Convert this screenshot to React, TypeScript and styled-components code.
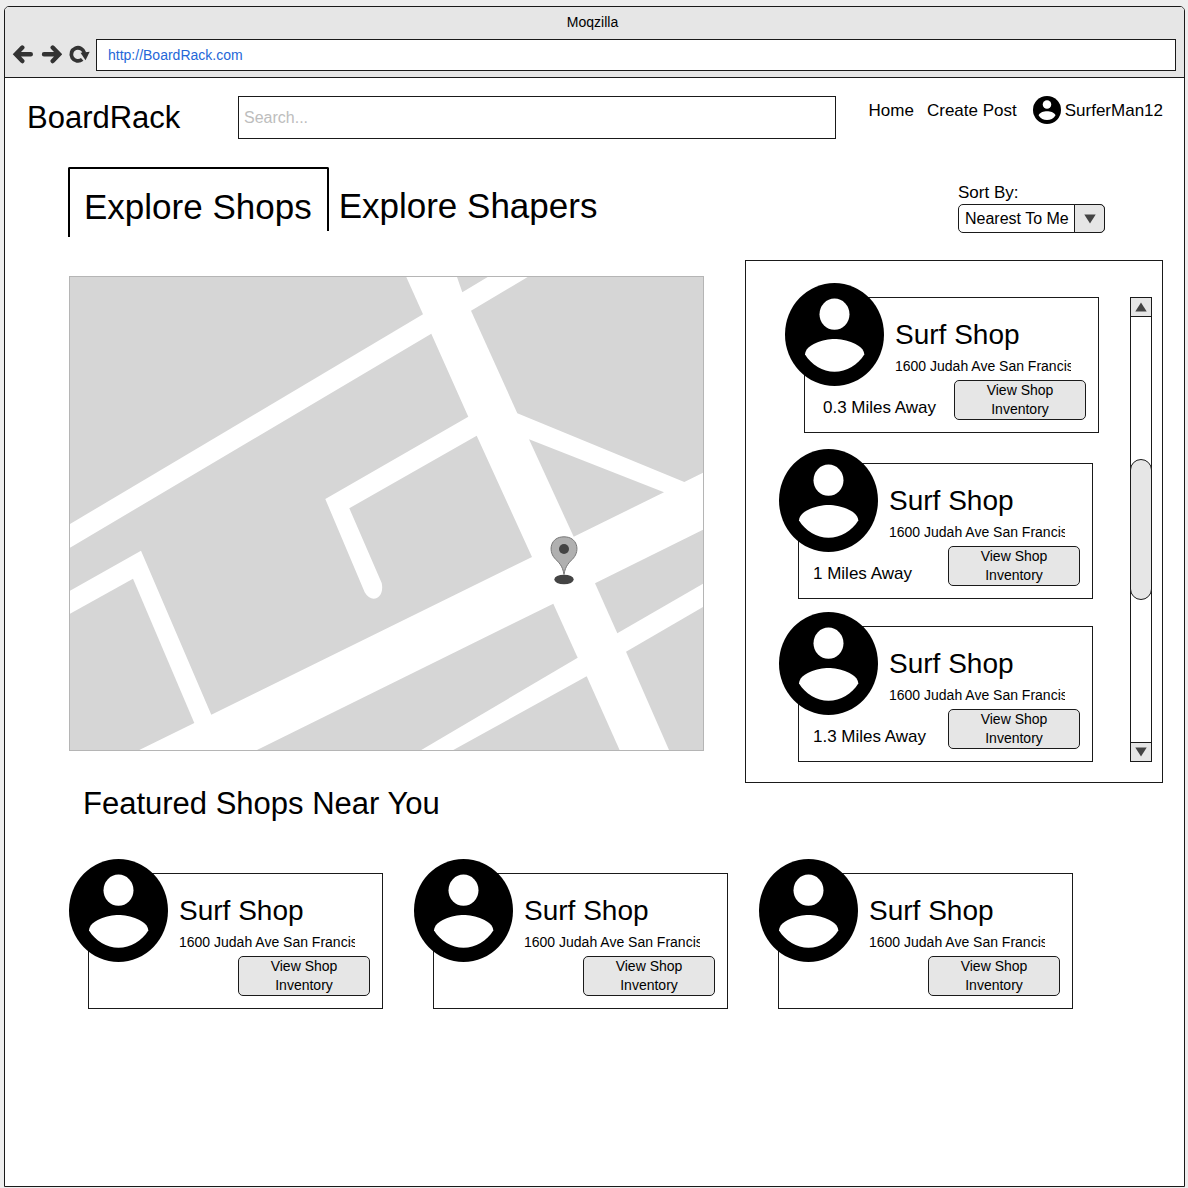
import React from "react";
import styled, { createGlobalStyle } from "styled-components";

const ink = "#1a1a1a";
const chrome = "#e6e6e6";

const GlobalStyle = createGlobalStyle`
  *, *::before, *::after { box-sizing: border-box; }
  body {
    margin: 0;
    background: #eeeeee;
    color: #000;
    font-family: "Liberation Sans", Arial, Helvetica, sans-serif;
    font-size: 16px;
  }
  button, input, select { font: inherit; color: inherit; }
  h1, h2, h3, p, ul { margin: 0; padding: 0; font-weight: 400; }
  ul { list-style: none; }
  a { color: inherit; text-decoration: none; }
`;

const Desktop = styled.div`
  display: flex;
  min-height: 100vh;
  padding: 6px 3px 1px 4px;
`;

const BrowserWindow = styled.div`
  flex: 1;
  min-width: 0;
  background: #fff;
  border: 1px solid ${ink};
  border-radius: 5px 5px 0 0;
  overflow: hidden;
`;

const BrowserBar = styled.div`
  background: ${chrome};
  border-bottom: 1px solid ${ink};
  padding-bottom: 6px;
`;

const WindowTitle = styled.div`
  font-size: 14px;
  line-height: 30px;
  text-align: center;
  padding: 0 4px 2px 0;
`;

const AddressRow = styled.div`
  display: flex;
  align-items: center;
  padding: 0 8px 0 7px;
`;

const BrowserButton = styled.button`
  display: flex;
  width: 28px;
  height: 28px;
  padding: 4px 0;
  border: 0;
  background: none;

  svg { width: 22px; height: 20px; }
`;

const AddressInput = styled.input`
  flex: 1;
  min-width: 0;
  height: 32px;
  padding: 0 11px;
  background: #fff;
  border: 1px solid ${ink};
  color: #2467d8;
  font-size: 14px;
`;

const SiteHeader = styled.header`
  display: flex;
  padding: 18px 21px 28px 22px;
`;

const Brand = styled.h1`
  flex: 0 0 211px;
  font-size: 31px;
  line-height: 43px;
`;

const SearchInput = styled.input`
  flex: 1;
  min-width: 0;
  height: 43px;
  padding: 0 5px;
  background: #fff;
  border: 1px solid ${ink};

  &::placeholder { color: #bdbdbd; opacity: 1; }
`;

const Nav = styled.nav`
  display: flex;
  gap: 13px;
  margin-left: 33px;
  font-size: 17px;
  line-height: 30px;
`;

const UserLink = styled.a`
  display: flex;
  gap: 4px;
  margin-left: 3px;
`;

const Avatar = styled.svg<{ $small?: boolean }>`
  display: block;
  flex: none;
  width: ${(p) => (p.$small ? 28 : 99)}px;
  height: ${(p) => (p.$small ? 28 : 103)}px;
`;

const Content = styled.main`
  padding: 0 21px 24px 63px;
`;

const Toolbar = styled.div`
  display: flex;
  justify-content: space-between;
  align-items: flex-start;
  height: 93px;
`;

const TabList = styled.div`
  display: flex;
`;

const Tab = styled.button<{ $active?: boolean }>`
  position: relative;
  height: 64px;
  padding: ${(p) => (p.$active ? "14px 15px 0 14px" : "14px 10px 0")};
  background: none;
  border: 0 solid #000;
  border-width: ${(p) => (p.$active ? "2px 2px 0" : "0")};
  border-radius: 2px 2px 0 0;
  font-size: 35px;
  line-height: ${(p) => (p.$active ? 48 : 50)}px;
  white-space: nowrap;

  &::after {
    content: "";
    display: ${(p) => (p.$active ? "block" : "none")};
    position: absolute;
    left: -2px;
    top: 100%;
    width: 2px;
    height: 6px;
    background: #000;
  }
`;

const SortField = styled.div`
  margin-right: 58px;
  padding-top: 14px;
`;

const SortLabel = styled.label`
  display: block;
  font-size: 17px;
  line-height: 23px;
`;

const SelectFrame = styled.div`
  position: relative;
  width: 147px;
  height: 29px;
`;

const Select = styled.select`
  appearance: none;
  width: 100%;
  height: 100%;
  padding: 0 30px 0 6px;
  background: #fff;
  border: 1px solid ${ink};
  border-radius: 5px;
`;

const SelectArrow = styled.span`
  position: absolute;
  top: 0;
  right: 0;
  display: grid;
  place-items: center;
  width: 31px;
  height: 100%;
  background: ${chrome};
  border: 1px solid ${ink};
  border-radius: 0 5px 5px 0;
  pointer-events: none;
`;

const Explorer = styled.section`
  display: grid;
  grid-template-columns: minmax(0, 635fr) minmax(0, 418fr);
  gap: 41px;
  align-items: start;
  padding-left: 1px;
`;

const MapArt = styled.svg`
  display: block;
  width: 100%;
  height: auto;
  margin-top: 16px;
`;

const ShopPanel = styled.div`
  display: flex;
  justify-content: space-between;
  padding: 22px 10px 20px 33px;
  border: 1px solid ${ink};
`;

const ShopList = styled.ul`
  display: flex;
  flex-direction: column;
  gap: 13px;
`;

const ShopItem = styled.li<{ $lead?: boolean }>`
  padding: ${(p) => (p.$lead ? "0 0 3px 6px" : "0")};
`;

const Card = styled.article`
  position: relative;
  width: 314px;
  padding: 14px 0 0 19px;

  > svg {
    position: absolute;
    left: 0;
    top: 0;
  }
`;

const CardBody = styled.div`
  height: 136px;
  padding: 20px 12px 12px 18px;
  border: 1px solid ${ink};
`;

const ShopName = styled.h3`
  padding-left: 72px;
  font-size: 28px;
  line-height: 34px;
`;

const Address = styled.p`
  width: 176px;
  margin: 5px 0 4px 72px;
  overflow: hidden;
  font-size: 14px;
  line-height: 19px;
  white-space: nowrap;
`;

const CardFooter = styled.div<{ $wide?: boolean }>`
  display: flex;
  align-items: center;
  margin-left: ${(p) => (p.$wide ? "-4px" : "0")};
`;

const Distance = styled.p`
  padding-top: 16px;
  font-size: 17px;
  line-height: 24px;
`;

const InventoryButton = styled.button`
  width: 132px;
  height: 40px;
  margin-left: auto;
  padding: 0 20px;
  background: ${chrome};
  border: 1px solid ${ink};
  border-radius: 5px;
  font-size: 14px;
  line-height: 19px;
`;

const ScrollBar = styled.div`
  display: flex;
  flex-direction: column;
  width: 22px;
  margin-top: 14px;
  border: 1px solid ${ink};
`;

const ScrollButton = styled.button<{ $end?: boolean }>`
  display: grid;
  place-items: center;
  height: 19px;
  padding: 0;
  background: ${chrome};
  border: 0 solid ${ink};
  border-width: ${(p) => (p.$end ? "1px 0 0" : "0 0 1px")};
`;

const ScrollTrack = styled.div`
  display: grid;
  grid-template-rows: 1fr 1fr 1fr;
  flex: 1;
`;

const ScrollThumb = styled.div`
  grid-row: 2;
  margin: 0 -1px;
  background: ${chrome};
  border: 1px solid ${ink};
  border-radius: 11px;
`;

const SectionTitle = styled.h2`
  padding-left: 15px;
  margin-bottom: 34px;
  font-size: 31px;
  line-height: 42px;
`;

const FeaturedRow = styled.div`
  display: flex;
  flex-wrap: wrap;
  gap: 31px;
  padding-left: 1px;
`;

function AvatarIcon({ small }: { small?: boolean }) {
  return (
    <Avatar $small={small} viewBox="0 0 99 103" preserveAspectRatio="none" aria-hidden="true">
      <ellipse cx="49.5" cy="51.5" rx="49.5" ry="51.5" fill="#000" />
      <ellipse cx="49.5" cy="31.2" rx="15" ry="15.6" fill="#fff" />
      <path
        d="M20 71.5C20.3 61.5 39 56 49.5 56S79 61.5 79.3 71.5C73 82 61.5 88.7 49.5 88.7S26.5 82 20 71.5Z"
        fill="#fff"
      />
    </Avatar>
  );
}

function Triangle({ up }: { up?: boolean }) {
  return (
    <svg width="12" height="10" viewBox="0 0 12 10" aria-hidden="true">
      <path d={up ? "M6 0.5L11.7 9.5H0.3Z" : "M6 9.5L11.7 0.5H0.3Z"} fill="#444" />
    </svg>
  );
}

type Shop = { id: number; distance?: string };

function ShopCard({ distance, lead }: { distance?: string; lead?: boolean }) {
  return (
    <Card>
      <CardBody>
        <ShopName>Surf Shop</ShopName>
        <Address>1600 Judah Ave San Francis</Address>
        <CardFooter $wide={!lead}>
          {distance && <Distance>{distance}</Distance>}
          <InventoryButton type="button">View Shop Inventory</InventoryButton>
        </CardFooter>
      </CardBody>
      <AvatarIcon />
    </Card>
  );
}

const blocks = [
  "1,1 337.3,1 354,38.3 1,248",
  "388,1 393.3,16.3 418.7,1",
  "458.7,1 402,34.7 448.3,137.3 615.3,206 634,196.7 634,1",
  "460,163.3 595,216.3 504.7,260.7",
  "1,337.7 64,302.7 125.3,447 70.3,474 1,474",
  "188,474 484.3,327.7 508.7,381.7 352.3,474",
  "384.3,474 517.7,400.3 550.6,474",
  "600,474 557,375.7 634,331 634,474",
  "526,307.3 634,253.7 634,307.7 548.3,357.3",
];

function StreetMap() {
  return (
    <MapArt viewBox="0 0 635 475" role="img" aria-label="Map of nearby shops">
      <rect width="635" height="475" fill="#fff" />
      <g fill="#d6d6d6">
        {blocks.map((points) => (
          <polygon key={points} points={points} />
        ))}
        <path d="M362.3 57.7L399.3 140.7L256.3 223L295.7 316.3C302 328 316 323 312.7 307L280.3 232.3L407.7 159.7L463 281L142.3 438.7L72 274.7L1 314.7V271.7Z" />
      </g>
      <rect x="0.5" y="0.5" width="634" height="474" fill="none" stroke="#b5b5b5" />
      <ellipse cx="495" cy="303.5" rx="9.7" ry="4.8" fill="#444" />
      <path
        d="M495 298.5C493.5 289 489.5 286.5 485.5 282C479 274.5 481.5 260.8 495 260.8S511 274.5 504.5 282C500.5 286.5 496.5 289 495 298.5Z"
        fill="#b0b0b0"
        stroke="#777"
      />
      <circle cx="495" cy="273" r="5" fill="#444" />
    </MapArt>
  );
}

const nearby: Shop[] = [
  { id: 1, distance: "0.3 Miles Away" },
  { id: 2, distance: "1 Miles Away" },
  { id: 3, distance: "1.3 Miles Away" },
];

const featured: Shop[] = [{ id: 4 }, { id: 5 }, { id: 6 }];

export default function App() {
  return (
    <>
      <GlobalStyle />
      <Desktop>
        <BrowserWindow>
          <BrowserBar>
            <WindowTitle>Moqzilla</WindowTitle>
            <AddressRow>
              <BrowserButton type="button" aria-label="Back">
                <svg viewBox="0 0 22 20" fill="none" stroke="#333" strokeWidth="4.4" strokeLinecap="round">
                  <path d="M18.8 9.3H5M10.3 2.5L3.8 9.3L10.3 16.1" />
                </svg>
              </BrowserButton>
              <BrowserButton type="button" aria-label="Forward">
                <svg viewBox="0 0 22 20" fill="none" stroke="#333" strokeWidth="4.4" strokeLinecap="round">
                  <path d="M4 9.3H18M12.700 2.5L19.2 9.3L12.700 16.1" />
                </svg>
              </BrowserButton>
              <BrowserButton type="button" aria-label="Reload">
                <svg viewBox="0 0 22 20">
                  <path d="M14.2 14.4A6.6 6.6 0 1 1 16.4 8" fill="none" stroke="#333" strokeWidth="3.8" />
                  <path d="M12.5 7.8L21.7 6.8L17.500 15.3Z" fill="#333" />
                </svg>
              </BrowserButton>
              <AddressInput aria-label="Address" defaultValue="http://BoardRack.com" />
            </AddressRow>
          </BrowserBar>

          <SiteHeader>
            <Brand>BoardRack</Brand>
            <SearchInput type="search" aria-label="Search" placeholder="Search..." />
            <Nav>
              <a href="#home">Home</a>
              <a href="#create">Create Post</a>
              <UserLink href="#profile">
                <AvatarIcon small />
                SurferMan12
              </UserLink>
            </Nav>
          </SiteHeader>

          <Content>
            <Toolbar>
              <TabList role="tablist">
                <Tab type="button" role="tab" aria-selected="true" $active>
                  Explore Shops
                </Tab>
                <Tab type="button" role="tab" aria-selected="false">
                  Explore Shapers
                </Tab>
              </TabList>
              <SortField>
                <SortLabel htmlFor="sort">Sort By:</SortLabel>
                <SelectFrame>
                  <Select id="sort" defaultValue="near">
                    <option value="near">Nearest To Me</option>
                  </Select>
                  <SelectArrow>
                    <Triangle />
                  </SelectArrow>
                </SelectFrame>
              </SortField>
            </Toolbar>

            <Explorer>
              <StreetMap />
              <ShopPanel>
                <ShopList>
                  {nearby.map((shop, i) => (
                    <ShopItem key={shop.id} $lead={i === 0}>
                      <ShopCard distance={shop.distance} lead={i === 0} />
                    </ShopItem>
                  ))}
                </ShopList>
                <ScrollBar>
                  <ScrollButton type="button" aria-label="Scroll up">
                    <Triangle up />
                  </ScrollButton>
                  <ScrollTrack>
                    <ScrollThumb />
                  </ScrollTrack>
                  <ScrollButton type="button" aria-label="Scroll down" $end>
                    <Triangle />
                  </ScrollButton>
                </ScrollBar>
              </ShopPanel>
            </Explorer>

            <section>
              <SectionTitle>Featured Shops Near You</SectionTitle>
              <FeaturedRow>
                {featured.map((shop) => (
                  <ShopCard key={shop.id} />
                ))}
              </FeaturedRow>
            </section>
          </Content>
        </BrowserWindow>
      </Desktop>
    </>
  );
}
